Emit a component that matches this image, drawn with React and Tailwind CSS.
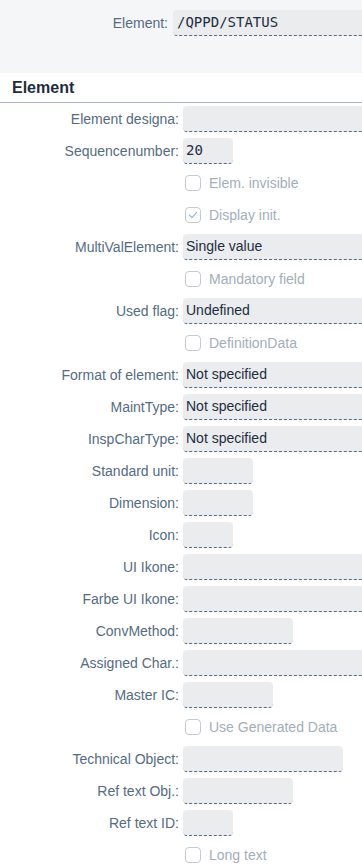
const rows = [
  { label: 'Element designa:', w: 'full' },
  { label: 'Sequencenumber:', w: 'w-[50px]', value: '20', mono: true },
  { check: 'Elem. invisible' },
  { check: 'Display init.', checked: true },
  { label: 'MultiValElement:', w: 'full', value: 'Single value' },
  { check: 'Mandatory field' },
  { label: 'Used flag:', w: 'full', value: 'Undefined' },
  { check: 'DefinitionData' },
  { label: 'Format of element:', w: 'full', value: 'Not specified' },
  { label: 'MaintType:', w: 'full', value: 'Not specified' },
  { label: 'InspCharType:', w: 'full', value: 'Not specified' },
  { label: 'Standard unit:', w: 'w-[70px]' },
  { label: 'Dimension:', w: 'w-[70px]' },
  { label: 'Icon:', w: 'w-[50px]' },
  { label: 'UI Ikone:', w: 'full' },
  { label: 'Farbe UI Ikone:', w: 'full' },
  { label: 'ConvMethod:', w: 'w-[110px]' },
  { label: 'Assigned Char.:', w: 'full' },
  { label: 'Master IC:', w: 'w-[90px]' },
  { check: 'Use Generated Data' },
  { label: 'Technical Object:', w: 'w-[160px]' },
  { label: 'Ref text Obj.:', w: 'w-[110px]' },
  { label: 'Ref text ID:', w: 'w-[50px]' },
  { check: 'Long text' },
]

function Field({ w, value, mono }) {
  const width = w === 'full' ? 'w-[200px] shrink-0' : `${w} shrink-0`
  return (
    <div
      className={`${width} h-[26px] rounded-[4px] bg-[#eaecee] border-b border-dashed border-[#556b82] flex items-center px-[3px] text-[14px] text-[#1d2d3e] ${
        mono ? "font-['DejaVu_Sans_Mono',monospace]" : ''
      }`}
    >
      {value}
    </div>
  )
}

function Checkbox({ checked }) {
  return (
    <div className="w-[16px] h-[16px] rounded-[4px] border border-[#c3cad1] flex items-center justify-center bg-white">
      {checked && (
        <svg width="10" height="10" viewBox="0 0 10 10" fill="none">
          <path d="M1.5 5.2L4 7.6L8.6 2.4" stroke="#8fb8ea" strokeWidth="1.2" strokeLinecap="round" strokeLinejoin="round" />
        </svg>
      )}
    </div>
  )
}

export default function App() {
  return (
    <div className="w-[362px] h-[865px] overflow-hidden bg-white font-['Liberation_Sans',Arial,sans-serif] text-[14px]">
      {/* Header */}
      <div className="h-[73px] bg-[#f5f6f7] pt-[10px] flex items-start">
        <div className="flex items-center">
          <span className="w-[168px] text-right text-[#556b82]">Element:</span>
          <div className="ml-[5px] w-[200px] h-[26px] rounded-[4px] bg-[#eaecee] border-b border-dashed border-[#556b82] flex items-center px-[4px] font-['DejaVu_Sans_Mono',monospace] text-[14px] text-[#1d2d3e]">
            /QPPD/STATUS
          </div>
        </div>
      </div>

      {/* Section title */}
      <div className="h-[30px] border-b border-[#a9b4be] flex items-center px-3">
        <h2 className="font-bold text-[16px] text-[#1d2d3e]">Element</h2>
      </div>

      {/* Form */}
      <div className="flex flex-col">
        {rows.map((r, i) =>
          r.check ? (
            <div key={i} className="h-[32px] flex items-center pl-[185px] gap-[8px]">
              <Checkbox checked={r.checked} />
              <span className="text-[#a3aeb9]">{r.check}</span>
            </div>
          ) : (
            <div key={i} className="h-[32px] flex items-center">
              <span className="w-[179px] shrink-0 text-right text-[#556b82] whitespace-nowrap">{r.label}</span>
              <div className="ml-[4px]">
                <Field w={r.w} value={r.value} mono={r.mono} />
              </div>
            </div>
          )
        )}
      </div>
    </div>
  )
}
